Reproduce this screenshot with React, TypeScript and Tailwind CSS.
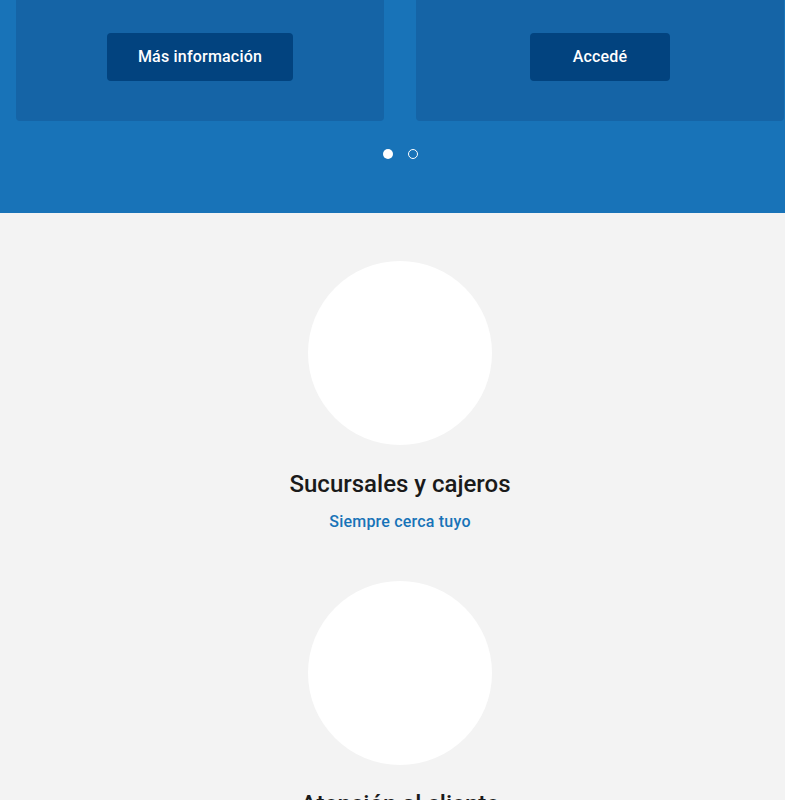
const services = [
  { title: "Sucursales y cajeros", link: "Siempre cerca tuyo" },
  { title: "Atención al cliente", link: "Estamos para ayudarte" },
];

const slides = [
  { label: "Más información", width: "w-[186px]" },
  { label: "Accedé", width: "w-[140px]" },
];

const App = () => {
  return (
    <div className="min-h-[800px] bg-[#f3f3f3] font-['Roboto',sans-serif]">
      {/* hero carousel */}
      <section className="bg-[#1873b8] pb-[54px]">
        <div className="flex gap-8 pl-4 overflow-hidden">
          {slides.map((s) => (
            <div
              key={s.label}
              className="w-[368px] shrink-0 h-[121px] bg-[#1564a6] rounded-b-sm flex justify-center pt-[33px]"
            >
              <button
                className={`${s.width} h-12 bg-[#02437f] rounded-sm text-white text-base font-medium tracking-[0.2px]`}
              >
                {s.label}
              </button>
            </div>
          ))}
        </div>
        <div className="flex justify-center gap-[15px] mt-[28px] pl-4">
          <span className="w-[10px] h-[10px] rounded-full bg-white" />
          <span className="w-[10px] h-[10px] rounded-full border border-white" />
        </div>
      </section>

      {/* services */}
      <section className="flex flex-col items-center pt-12 pl-[15px]">
        {services.map((s) => (
          <div key={s.title} className="flex flex-col items-center mb-[47px]">
            <div className="w-[184px] h-[184px] rounded-full bg-white" />
            <h3 className="mt-[24px] text-2xl font-medium text-[#1a1a1a] leading-[30px]">
              {s.title}
            </h3>
            <a className="mt-[11px] text-base font-medium text-[#1873b8] leading-[24px] tracking-[0.2px]">
              {s.link}
            </a>
          </div>
        ))}
      </section>
    </div>
  );
};

export default App;
